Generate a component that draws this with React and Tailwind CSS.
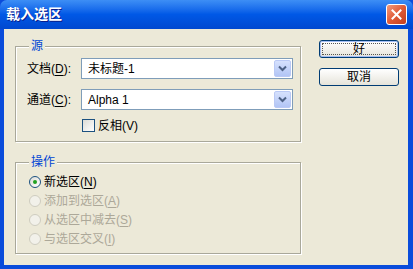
import React from "react";

const font = { fontFamily: '"Liberation Sans", "Noto Sans CJK SC", sans-serif' };

function Ul({ children }) {
  return <span className="underline underline-offset-2">{children}</span>;
}

function Combo({ value }) {
  return (
    <div className="flex h-[21px] w-[212px] items-center border border-[#7F9DB9] bg-white p-[1px]">
      <span className="flex-1 pl-[5px] text-[12px] leading-none text-black">{value}</span>
      <div className="flex h-[17px] w-[17px] items-center justify-center rounded-[2px] border border-[#BAC9F5] bg-gradient-to-b from-[#D6E1FD] to-[#B2C5F5]">
        <svg width="9" height="7" viewBox="0 0 9 7">
          <path d="M1 1.5 L4.5 5 L8 1.5" fill="none" stroke="#4D6185" strokeWidth="2" />
        </svg>
      </div>
    </div>
  );
}

function Radio({ checked, disabled, children }) {
  return (
    <div className="flex h-[19px] items-center">
      <div
        className={`flex h-[12px] w-[12px] items-center justify-center rounded-full border ${
          disabled ? "border-[#CFCDC0] bg-[#F2F1EA]" : "border-[#1C5180] bg-gradient-to-br from-[#DCDCD6] to-white"
        }`}
      >
        {checked && <div className="h-[4px] w-[4px] rounded-full bg-[#21A121]" />}
      </div>
      <span className={`ml-[3px] text-[12px] leading-none ${disabled ? "text-[#ACA899]" : "text-black"}`}>
        {children}
      </span>
    </div>
  );
}

function Group({ title, className, children }) {
  return (
    <div className={`relative w-[286px] border border-[#A9A89A] shadow-[inset_1px_1px_0_#fff,1px_1px_0_#fff] ${className}`}>
      <span className="absolute left-[13px] top-[-8px] bg-[#ECE9D8] px-[2px] text-[12px] leading-[14px] text-[#0046D5]">
        {title}
      </span>
      {children}
    </div>
  );
}

function Button({ children, isDefault }) {
  return (
    <div
      className={`flex h-[18px] w-[80px] items-center justify-center rounded-[3px] border border-[#003C74] bg-gradient-to-b from-white to-[#E6E4DA] text-[12px] leading-none text-black ${
        isDefault ? "shadow-[inset_0_0_0_1px_#A4BEF5]" : ""
      }`}
    >
      {isDefault ? (
        <div className="flex h-[12px] w-[74px] items-center justify-center border border-dotted border-[#555]">
          {children}
        </div>
      ) : (
        children
      )}
    </div>
  );
}

export default function App() {
  return (
    <div className="flex h-[269px] w-[413px] flex-col bg-[#0A4CDB]" style={font}>
      {/* title bar */}
      <div className="flex h-[29px] items-center rounded-t-[7px] bg-gradient-to-b from-[#3D8EF5] via-[#0058E6] to-[#0048D0] pl-[6px] pr-[6px]">
        <span className="flex-1 text-[14px] font-bold text-white [text-shadow:1px_1px_0_#0A1E8C]">载入选区</span>
        <div className="flex h-[21px] w-[21px] items-center justify-center rounded-[3px] border border-white bg-gradient-to-br from-[#F09A7C] via-[#E05A36] to-[#C23F1E]">
          <svg width="11" height="11" viewBox="0 0 11 11">
            <path d="M1.5 1.5 L9.5 9.5 M9.5 1.5 L1.5 9.5" stroke="#fff" strokeWidth="2" strokeLinecap="square" />
          </svg>
        </div>
      </div>

      {/* client area */}
      <div className="mb-[4px] ml-[4px] mr-[5px] flex flex-1 bg-[#ECE9D8] pl-[11px]">
        <div className="flex flex-col">
          <Group title="源" className="mt-[17px] h-[96px]">
            <div className="grid grid-cols-[54px_212px] items-center gap-y-[10px] pl-[11px] pt-[11px]">
              <span className="text-[12px] leading-none text-black">
                文档(<Ul>D</Ul>):
              </span>
              <Combo value="未标题-1" />
              <span className="text-[12px] leading-none text-black">
                通道(<Ul>C</Ul>):
              </span>
              <Combo value="Alpha 1" />
              <span />
              <div className="-mt-[1px] flex items-center pl-[1px]">
                <div className="h-[13px] w-[13px] border border-[#1C5180] bg-gradient-to-br from-[#DCDCD6] to-white" />
                <span className="ml-[3px] text-[12px] leading-none text-black">反相(V)</span>
              </div>
            </div>
          </Group>

          <Group title="操作" className="mt-[20px] h-[92px]">
            <div className="flex flex-col pl-[13px] pt-[9px]">
              <Radio checked>
                新选区(<Ul>N</Ul>)
              </Radio>
              <Radio disabled>
                添加到选区(<Ul>A</Ul>)
              </Radio>
              <Radio disabled>
                从选区中减去(<Ul>S</Ul>)
              </Radio>
              <Radio disabled>
                与选区交叉(<Ul>I</Ul>)
              </Radio>
            </div>
          </Group>
        </div>

        <div className="ml-[18px] mt-[11px] flex flex-col gap-[10px]">
          <Button isDefault>好</Button>
          <Button>取消</Button>
        </div>
      </div>
    </div>
  );
}
